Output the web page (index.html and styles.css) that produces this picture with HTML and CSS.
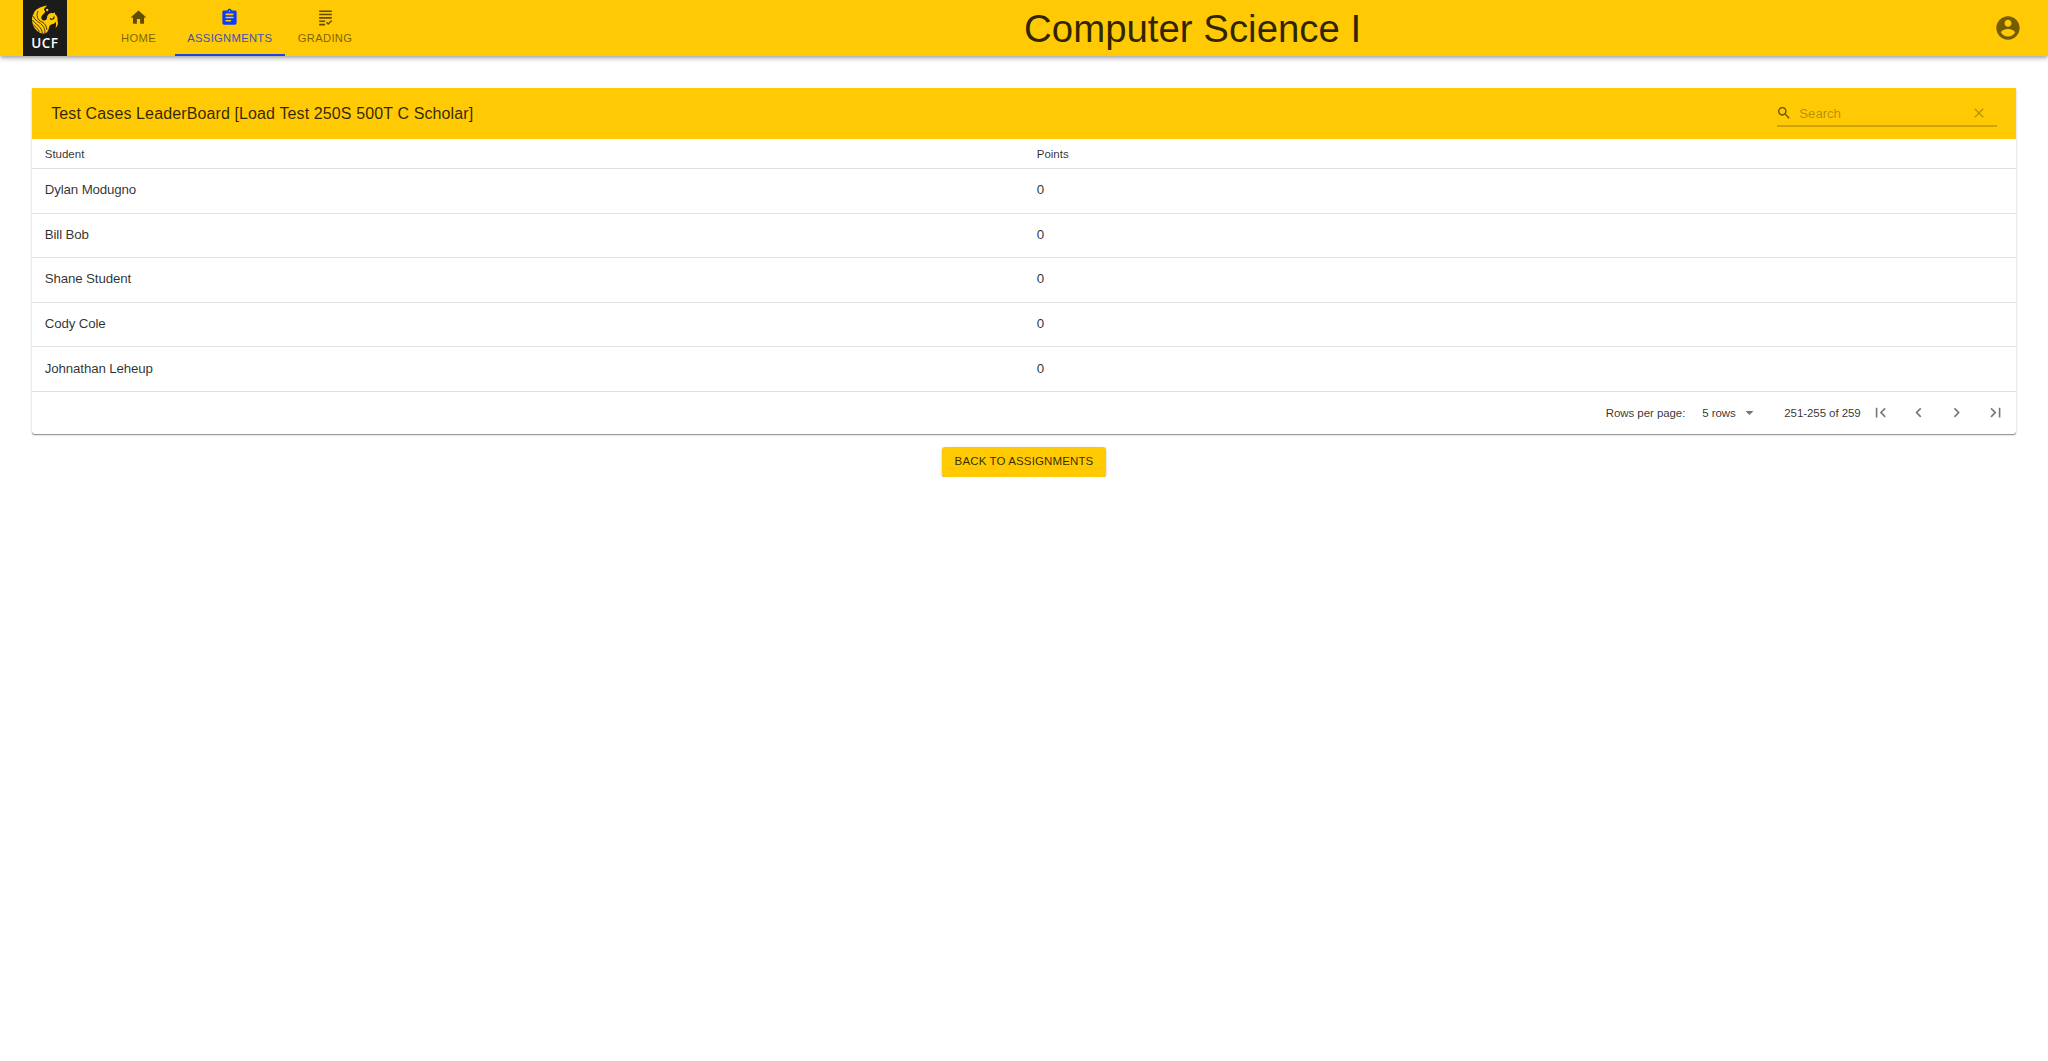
FILE: index.html
```html
<!DOCTYPE html>
<html lang="en">
<head>
<meta charset="utf-8">
<title>Computer Science I</title>
<link rel="stylesheet" href="styles.css">
</head>
<body>
<header class="appbar">
  <div class="logo">
    <svg class="pegasus" viewBox="0 0 28 30" width="28" height="30">
      <g fill="#ffc904">
        <path d="M16 .5C9 2 4 4 2.500 9C1 11 .8 14 1.300 17C2 22 5 25.500 8.500 27.500C11 29.200 15 29 16.500 26.500C18.500 23.500 17.500 21.500 19.500 20C21.500 18.500 24.500 19 24.300 16.500C25.500 18 25 20 24.600 23C27 21 27.500 18 26.500 16C27 13 26 10.500 24 9L24 7.500L22 8.200C18.500 7.500 16 10 16 13C15.800 16 11.500 16.500 10.500 13.500C9.800 11 12 9.500 13.500 8C14.500 6.500 14 5.500 13 5.300C12.500 3.500 15 2 16 .5Z"/>
        <circle cx="16.200" cy="5" r="1.200"/>
      </g>
      <g fill="none" stroke="#1b1b19" stroke-width=".8">
        <path d="M2 11C4 16 9 17 12 21C13.500 23 14 26 14 28.500M1.500 15C4 19 8 20 10 24L11.500 28M2.500 20C5 22 7 24 8.500 27M7 6C5 10 6 15 11 17C14 18.500 15.500 21 16 25"/>
        <path d="M19 13.500C21 15 23.500 14 23 11.500" stroke-width="1.200"/>
      </g>
    </svg>
    <span class="logo-text">UCF</span>
  </div>
  <nav class="tabs">
    <a class="tab tab-home"><svg class="tab-icon" viewBox="0 0 24 24"><path d="M10 20v-6h4v6h5v-8h3L12 3 2 12h3v8z"/></svg><span>HOME</span></a>
    <a class="tab tab-active"><svg class="tab-icon" viewBox="0 0 24 24"><path d="M19 3h-4.180C14.400 1.840 13.300 1 12 1c-1.300 0-2.400.84-2.820 2H5c-1.100 0-2 .9-2 2v14c0 1.100.9 2 2 2h14c1.100 0 2-.9 2-2V5c0-1.100-.9-2-2-2zm-7 0c.55 0 1 .45 1 1s-.45 1-1 1-1-.45-1-1 .45-1 1-1zm2 14H7v-2h7v2zm3-4H7v-2h10v2zm0-4H7V7h10v2z"/></svg><span>ASSIGNMENTS</span></a>
    <a class="tab"><svg class="tab-icon" viewBox="0 0 24 24"><path d="M4 3h16v2H4zM4 7.250h16v2H4zM4 11.500h16v2H4zM4 15.750h7.500v2H4zM4 20h7.500v2H4zM15.410 21.500l-2.800-2.800 1.300-1.300 1.500 1.500 3.800-3.800 1.300 1.300z"/></svg><span>GRADING</span></a>
  </nav>
  <h1 class="course">Computer Science I</h1>
  <svg class="account" viewBox="0 0 24 24"><path d="M12 2C6.480 2 2 6.480 2 12s4.480 10 10 10 10-4.480 10-10S17.520 2 12 2zm0 3c1.660 0 3 1.340 3 3s-1.340 3-3 3-3-1.340-3-3 1.340-3 3-3zm0 14.200c-2.500 0-4.710-1.280-6-3.220.03-1.990 4-3.080 6-3.080 1.990 0 5.970 1.090 6 3.080-1.290 1.940-3.500 3.220-6 3.220z"/></svg>
</header>
<main class="page">
  <section class="card">
    <div class="card-head">
      <h2 class="card-title">Test Cases LeaderBoard [Load Test 250S 500T C Scholar]</h2>
      <div class="search">
        <svg class="search-icon" viewBox="0 0 24 24"><path d="M15.500 14h-.79l-.28-.27C15.410 12.590 16 11.110 16 9.500 16 5.910 13.090 3 9.500 3S3 5.910 3 9.500 5.910 16 9.500 16c1.610 0 3.090-.59 4.230-1.570l.27.28v.79l5 4.990L20.490 19l-4.990-5zm-6 0C7.010 14 5 11.990 5 9.500S7.010 5 9.500 5 14 7.010 14 9.500 11.990 14 9.500 14z"/></svg>
        <span class="placeholder">Search</span>
        <svg class="clear-icon" viewBox="0 0 24 24"><path d="M19 6.410L17.590 5 12 10.590 6.410 5 5 6.410 10.590 12 5 17.590 6.410 19 12 13.410 17.590 19 19 17.590 13.410 12z"/></svg>
      </div>
    </div>
    <table class="board">
      <thead><tr><th>Student</th><th>Points</th></tr></thead>
      <tbody>
        <tr><td>Dylan Modugno</td><td>0</td></tr>
        <tr><td>Bill Bob</td><td>0</td></tr>
        <tr><td>Shane Student</td><td>0</td></tr>
        <tr><td>Cody Cole</td><td>0</td></tr>
        <tr><td>Johnathan Leheup</td><td>0</td></tr>
      </tbody>
    </table>
    <div class="pager">
      <span>Rows per page:</span>
      <span class="rows">5 rows</span>
      <svg class="caret" viewBox="0 0 24 24"><path d="M7 10l5 5 5-5z"/></svg>
      <span class="range">251-255 of 259</span>
      <div class="pager-buttons">
        <svg viewBox="0 0 24 24"><path d="M18.410 16.590L13.820 12l4.590-4.590L17 6l-6 6 6 6zM6 6h2v12H6z"/></svg>
        <svg viewBox="0 0 24 24"><path d="M15.410 7.410L14 6l-6 6 6 6 1.410-1.410L10.830 12z"/></svg>
        <svg viewBox="0 0 24 24"><path d="M10 6L8.590 7.410 13.170 12l-4.580 4.590L10 18l6-6z"/></svg>
        <svg viewBox="0 0 24 24"><path d="M5.590 7.410L10.180 12l-4.590 4.590L7 18l6-6-6-6zM16 6h2v12h-2z"/></svg>
      </div>
    </div>
  </section>
  <button class="back">BACK TO ASSIGNMENTS</button>
</main>
</body>
</html>
```
FILE: styles.css
```css
* { box-sizing: border-box; }
body {
  margin: 0;
  background: #fff;
  color: rgba(0, 0, 0, .82);
  font-family: "Liberation Sans", Arial, sans-serif;
}
svg { display: block; fill: currentColor; flex: none; }
h1, h2 { margin: 0; font-weight: 400; }

.appbar {
  display: flex;
  align-items: center;
  height: 56px;
  padding: 0 26px 0 23px;
  background: #ffc904;
  box-shadow: 0 1.600px 3.200px -1px rgba(0, 0, 0, .2), 0 3.200px 4px rgba(0, 0, 0, .14), 0 1px 8px rgba(0, 0, 0, .12);
}
.logo {
  display: flex;
  flex-direction: column;
  align-items: center;
  width: 43.500px;
  height: 56px;
  padding-top: 5px;
  background: #1b1b19;
}
.logo-text {
  margin-top: 1px;
  font: 600 13.500px/15px "Open Sans", sans-serif;
  letter-spacing: .4px;
  color: #fff;
}
.tabs { display: flex; margin-left: 36px; height: 56px; }
.tab {
  display: flex;
  flex-direction: column;
  align-items: center;
  padding: 8px 12.800px 0;
  color: rgba(0, 0, 0, .54);
  font-size: 11.200px;
  line-height: 20px;
  letter-spacing: .32px;
}
.tab-home { width: 72px; }
.tab-icon { width: 19px; height: 19px; margin-bottom: 1px; color: rgba(0, 0, 0, .62); }
.tab-active { color: #3f51b5; border-bottom: 2px solid #1f45d8; }
.tab-active .tab-icon { color: #0a3cff; }
.course { margin-left: 659px; padding-top: 2px; font-size: 38.400px; line-height: 56px; white-space: nowrap; }
.account { width: 28px; height: 28px; margin-left: auto; color: rgba(0, 0, 0, .54); }

.page { display: flex; flex-direction: column; align-items: center; padding: 32px 32px 0; }
.card {
  width: 100%;
  border-radius: 0 0 3px 3px;
  box-shadow: 0 1.600px 1px -.8px rgba(0, 0, 0, .25), 0 1px 1px rgba(0, 0, 0, .16), 0 1px 3px rgba(0, 0, 0, .14);
}
.card-head {
  display: flex;
  align-items: center;
  justify-content: space-between;
  height: 51px;
  padding: 0 19.200px;
  background: #ffc904;
}
.card-title { font-size: 16px; letter-spacing: .12px; }
.search {
  display: flex;
  align-items: center;
  width: 220px;
  height: 26px;
  margin-top: 1px;
  border-bottom: 2px solid rgba(0, 0, 0, .18);
}
.search-icon { width: 16px; height: 16px; margin-left: -.5px; color: rgba(0, 0, 0, .6); }
.placeholder { margin-left: 7px; font-size: 13.300px; letter-spacing: -.1px; color: rgba(0, 0, 0, .3); }
.clear-icon { width: 16px; height: 16px; margin: 0 10px 0 auto; color: rgba(0, 0, 0, .27); }

.board { width: 100%; border-collapse: separate; border-spacing: 0; table-layout: fixed; }
.board th, .board td { padding: 0 12.800px; text-align: left; border-bottom: 1px solid #e0e0e0; }
.board th { height: 30px; font-size: 11.500px; font-weight: 400; letter-spacing: -.02px; }
.board td { height: 44.600px; padding-bottom: 2px; font-size: 13.300px; letter-spacing: -.14px; }

.pager {
  display: flex;
  align-items: center;
  justify-content: flex-end;
  height: 42px;
  padding-right: 11px;
  font-size: 11.500px;
  letter-spacing: -.07px;
}
.rows { margin-left: 17px; }
.caret { width: 19px; height: 19px; margin-left: 4.500px; color: rgba(0, 0, 0, .54); }
.range { margin-left: 25px; }
.pager-buttons { display: flex; gap: 19.200px; margin-left: 10px; color: rgba(0, 0, 0, .54); }
.pager-buttons svg { width: 19.200px; height: 19.200px; }

.back {
  width: 164px;
  height: 30px;
  margin-top: 13px;
  padding: 0;
  border: 0;
  border-radius: 3.200px;
  background: #ffc904;
  color: rgba(0, 0, 0, .8);
  font: 400 11.500px/29px "Liberation Sans", Arial, sans-serif;
  letter-spacing: .13px;
  box-shadow: 0 2px 1px -1px rgba(0, 0, 0, .25), 0 1px 1.600px rgba(0, 0, 0, .18), 0 1px 4px rgba(0, 0, 0, .12);
}
```
